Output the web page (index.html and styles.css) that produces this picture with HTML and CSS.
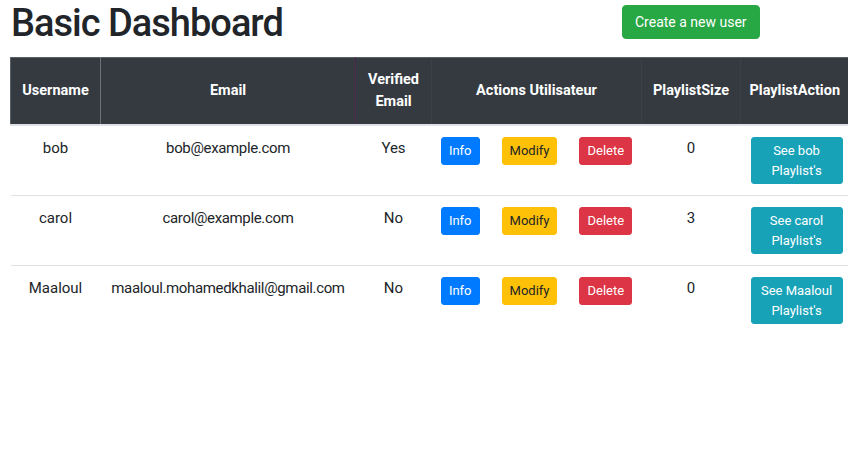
FILE: index.html
```html
<!DOCTYPE html>
<html>
<head>
<meta charset="utf-8">
<link rel="stylesheet" href="styles.css">
</head>
<body>
<div class="page">
  <div class="topbar">
    <h1 class="title">Basic Dashboard</h1>
    <button class="btn btn-success btn-create">Create a new user</button>
  </div>
  <table class="users">
    <colgroup>
      <col class="c-user"><col class="c-email"><col class="c-ver"><col class="c-act"><col class="c-size"><col class="c-pa">
    </colgroup>
    <thead>
      <tr>
        <th class="sep">Username</th>
        <th class="sep-purple">Email</th>
        <th>Verified Email</th>
        <th>Actions Utilisateur</th>
        <th>PlaylistSize</th>
        <th>PlaylistAction</th>
      </tr>
    </thead>
    <tbody>
      <tr>
        <td>bob</td>
        <td>bob@example.com</td>
        <td>Yes</td>
        <td class="actions"><button class="btn btn-info">Info</button><button class="btn btn-warning">Modify</button><button class="btn btn-danger">Delete</button></td>
        <td>0</td>
        <td class="pa"><button class="btn btn-teal">See bob Playlist's</button></td>
      </tr>
      <tr>
        <td>carol</td>
        <td>carol@example.com</td>
        <td>No</td>
        <td class="actions"><button class="btn btn-info">Info</button><button class="btn btn-warning">Modify</button><button class="btn btn-danger">Delete</button></td>
        <td>3</td>
        <td class="pa"><button class="btn btn-teal">See carol Playlist's</button></td>
      </tr>
      <tr>
        <td>Maaloul</td>
        <td>maaloul.mohamedkhalil@gmail.com</td>
        <td>No</td>
        <td class="actions"><button class="btn btn-info">Info</button><button class="btn btn-warning">Modify</button><button class="btn btn-danger">Delete</button></td>
        <td>0</td>
        <td class="pa"><button class="btn btn-teal">See Maaloul Playlist's</button></td>
      </tr>
    </tbody>
  </table>
</div>
</body>
</html>
```

FILE: styles.css
```css
* { box-sizing: border-box; }
html, body { margin: 0; padding: 0; background: #fff; }
body {
  font-family: Roboto, "Noto Sans", sans-serif;
  font-size: 15px;
  line-height: 1.5;
  color: #212529;
  overflow: hidden;
}
.page { padding: 0 0 0 10px; width: 848px; }
.topbar {
  display: grid;
  grid-template-columns: 612px auto;
  align-items: start;
  height: 57px;
}
.title {
  margin: 0;
  padding: 0 0 0 1px;
  font-size: 38px;
  font-weight: 500;
  line-height: 46px;
  letter-spacing: -1px;
}
.btn {
  font-family: inherit;
  border: 1px solid transparent;
  border-radius: 3px;
  font-size: 13px;
  line-height: 19.5px;
  padding: 3px 7px;
  color: #fff;
  cursor: pointer;
  white-space: nowrap;
}
.btn-create {
  margin-top: 5px;
  font-size: 14px;
  line-height: 20px;
  padding: 6px 12px;
  border-radius: 4px;
  justify-self: start;
}
.btn-success { background: #28a745; border-color: #28a745; }
.btn-info { background: #007bff; border-color: #007bff; }
.btn-warning { background: #ffc107; border-color: #ffc107; color: #212529; }
.btn-danger { background: #dc3545; border-color: #dc3545; }
.btn-teal {
  background: #17a2b8; border-color: #17a2b8;
  width: 100%; padding: 3px 6px; white-space: normal;
}

.users {
  border-collapse: collapse;
  table-layout: fixed;
  width: 838px;
}
.c-user { width: 90px; }
.c-email { width: 255px; }
.c-ver { width: 76px; }
.c-act { width: 210px; }
.c-size { width: 99px; }
.c-pa { width: 108px; }

.users th {
  background: #343a40;
  color: #fff;
  font-weight: 700;
  font-size: 14.5px;
  line-height: 22px;
  padding: 11px 6px;
  text-align: center;
  vertical-align: middle;
  border-top: 1px solid #5a6068;
  border-bottom: 2px solid #dee2e6;
  border-left: 1px solid #3b4148;
}
.users th:first-child { border-left: 1px solid #5a6068; }
.users th:last-child { padding: 11px 2px; }
.users th.sep { border-right: 1px solid #6b7178; }
.users th.sep-purple { border-right: 1px solid #4b2b4d; }
.users td {
  padding: 11px 10px;
  text-align: center;
  vertical-align: top;
  font-size: 15px;
  line-height: 22px;
  border-top: 1px solid #dee2e6;
}
.users td.email { letter-spacing: -0.4px; }
.users td:nth-child(2) { letter-spacing: -0.35px; }
.users tbody tr:first-child td { border-top: none; }
.users td.actions { padding-left: 4px; padding-right: 4px; }
.actions .btn + .btn { margin-left: 22px; }
.users td.pa { padding: 11px 6px 11px 10px; }
```
